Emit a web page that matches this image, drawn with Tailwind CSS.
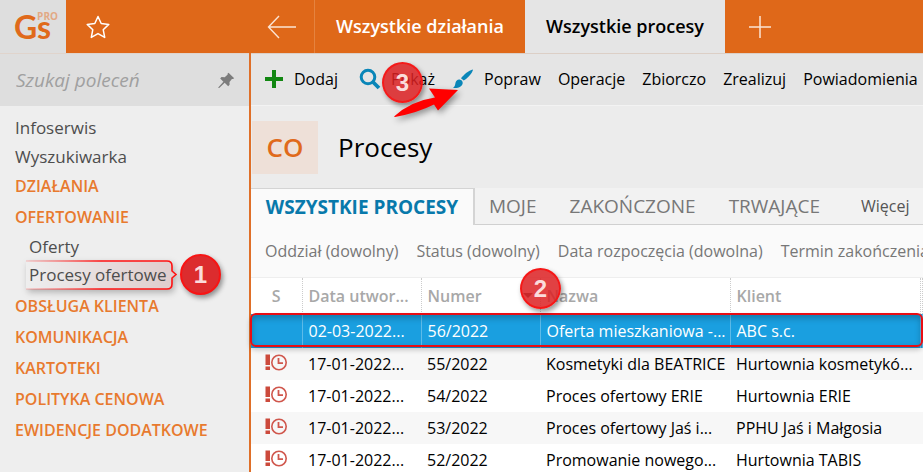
<!DOCTYPE html>
<html lang="pl">
<head>
  <meta charset="UTF-8" />
  <meta name="viewport" content="width=device-width, initial-scale=1.0" />
  <title>Wszystkie procesy</title>
  <script src="https://cdn.jsdelivr.net/npm/@tailwindcss/browser@4"></script>
</head>
<body class="min-h-screen h-screen overflow-hidden flex flex-col bg-[#ececec] font-['Open_Sans','Noto_Sans',sans-serif] text-[16px] text-black whitespace-nowrap">

  <header class="flex h-[53px] shrink-0 bg-[#df6819] text-white">
    <div class="flex w-[251px] shrink-0">
      <a href="#" class="flex w-[66px] items-center bg-[#dedede] pl-[14px] text-[#e06a1b]" aria-label="Gs PRO">
        <span class="font-['Lato',sans-serif] text-[32px] font-bold leading-none">Gs</span>
        <span class="-ml-[14px] mb-[21px] text-[10px] leading-none font-bold text-[#e2a985]">PRO</span>
      </a>
      <button class="ml-[19px]" aria-label="Ulubione">
        <svg width="26" height="26" viewBox="0 0 26 26" fill="none" stroke="#fff" stroke-width="1.5" stroke-linejoin="round"><path d="M13 2.5l3.2 7 7.6.9-5.6 5.3 1.5 7.7-6.7-3.8-6.7 3.8 1.5-7.7L2.2 10.4l7.6-.9z"/></svg>
      </button>
    </div>
    <button class="w-[63px] shrink-0 pl-4" aria-label="Wstecz">
      <svg width="30" height="24" viewBox="0 0 30 24" fill="none" stroke="#fbe3d3" stroke-width="1.4"><path d="M29 12H1.5M12 1L1.500 12 12 23"/></svg>
    </button>
    <nav class="flex text-[18px] font-semibold">
      <a href="#" class="flex w-[211px] items-center justify-center border-l border-[#e5833f]">Wszystkie działania</a>
      <a href="#" class="flex w-[200px] items-center justify-center bg-[#e5e5e5] text-black">Wszystkie procesy</a>
    </nav>
    <button class="ml-[23px]" aria-label="Nowa karta">
      <svg width="24" height="24" viewBox="0 0 24 24" stroke="#fbe3d3" stroke-width="1.5"><path d="M12 1v22M1 12h22"/></svg>
    </button>
  </header>

  <div class="flex min-h-0 grow">
    <aside class="w-[251px] shrink-0 border-r-2 border-[#df6f28] bg-[#eee]">
      <div class="flex h-[53px] items-center border-t border-[#e0d4cc] bg-[#dedede] pr-[14px] pl-4">
        <input type="text" aria-label="Szukaj poleceń" placeholder="Szukaj poleceń" class="min-w-0 grow text-[19px] italic outline-none placeholder:text-[#a0a0a0]" />
        <button aria-label="Przypnij">
          <svg width="17" height="17" viewBox="0 0 17 17" fill="#7c7c7c"><path d="M10.500.8l5.700 5.400-1.300.9-1-.2-2.400 3 .1 2.900-1.400 1.400-3.500-3.400L1.200 16H.4v-.8l5-5.500L2.200 6.500l1.300-1.400 3.200.1 3-2.600-.2-.8z"/></svg>
        </button>
      </div>
      <ul class="pt-[7px] pl-[15px] text-[#4d4d4d]">
        <li class="text-[17px] leading-[29px]"><a href="#">Infoserwis</a></li>
        <li class="text-[17px] leading-[29px]"><a href="#">Wyszukiwarka</a></li>
        <li class="leading-[31px] font-semibold text-[#e87a2e]"><a href="#">DZIAŁANIA</a></li>
        <li class="leading-[31px] font-semibold text-[#e87a2e]"><a href="#">OFERTOWANIE</a></li>
        <li class="pb-[2px] pl-[14px] text-[17px] leading-[28px]">
          <ul>
            <li><a href="#">Oferty</a></li>
            <li class="relative">
              <a href="#" class="relative z-10">Procesy ofertowe</a>
              <!-- callout 1 -->
              <svg class="absolute -top-[5px] -left-[4px] overflow-visible drop-shadow-[2px_3px_3px_rgba(0,0,0,0.25)]" width="156" height="36" viewBox="0 0 156 36" fill="none">
                <defs>
                  <linearGradient id="calloutLine" x1="0" x2="1"><stop stop-color="#f33" stop-opacity=".2"/><stop offset=".5" stop-color="#f11"/></linearGradient>
                  <linearGradient id="calloutFill" x1="0" x2="1"><stop stop-color="#eee"/><stop offset="1" stop-color="#dfcccc"/></linearGradient>
                </defs>
                <path d="M1 5H142Q147 5 147 10V15L151 18.500 147 22V28Q147 33 142 33H1z" fill="url(#calloutFill)"/>
                <path d="M1 5H142Q147 5 147 10V15L151 18.500 147 22V28Q147 33 142 33H1" stroke="url(#calloutLine)" stroke-width="1.6"/>
              </svg>
              <span class="absolute -top-[7px] left-[151px] flex size-[41px] items-center justify-center rounded-full border-2 border-[#f81414] bg-[#dc2c2e] font-['Liberation_Sans',sans-serif] text-[24px] font-bold text-[#fbdcdc] shadow-[2px_3px_5px_rgba(0,0,0,0.4)]">1</span>
            </li>
          </ul>
        </li>
        <li class="leading-[31px] font-semibold text-[#e87a2e]"><a href="#">OBSŁUGA KLIENTA</a></li>
        <li class="leading-[31px] font-semibold text-[#e87a2e]"><a href="#">KOMUNIKACJA</a></li>
        <li class="leading-[31px] font-semibold text-[#e87a2e]"><a href="#">KARTOTEKI</a></li>
        <li class="leading-[31px] font-semibold text-[#e87a2e]"><a href="#">POLITYKA CENOWA</a></li>
        <li class="leading-[31px] font-semibold text-[#e87a2e]"><a href="#">EWIDENCJE DODATKOWE</a></li>
      </ul>
    </aside>

    <main class="min-w-0 grow">
      <div class="relative flex h-[53px] items-center gap-[17px] border-t border-b border-t-[#dccfc6] border-b-[#f3f3f3] bg-[#e5e5e5] pb-px pl-[13px]">
        <button class="flex items-center gap-[10px]">
          <svg width="20" height="20" viewBox="0 0 20 20" fill="#128712"><path d="M8 1h4v7h7v4h-7v7H8v-7H1V8h7z"/></svg>
          Dodaj
        </button>
        <button class="flex items-center gap-[10px] pl-1">
          <svg width="22" height="22" viewBox="0 0 22 22" fill="none" stroke="#0a86b8" stroke-width="3"><circle cx="9" cy="9" r="6.8"/><path d="M14 14l6 6" stroke-width="3.8"/></svg>
          Pokaż
        </button>
        <button class="flex items-center gap-[10px]">
          <svg width="22" height="22" viewBox="0 0 22 22" fill="#0a86b8"><path d="M21 1.500c-.4 3.500-5 8.300-9.300 11.100L9 10.200C12 6.500 16.500 2.400 21 1.500z"/><path d="M7.600 11.500c1.800.3 3 1.600 3.100 3.200.2 3.400-4.200 6-9.700 5.300 2.200-1.500 2-3.200 2.500-5.200.5-2.100 2.100-3.600 4.100-3.300z"/></svg>
          Popraw
        </button>
        <button>Operacje</button>
        <button>Zbiorczo</button>
        <button>Zrealizuj</button>
        <button>Powiadomienia</button>
        <!-- callout 3 -->
        <span class="absolute top-[8px] left-[131px] flex size-[41px] items-center justify-center rounded-full border-2 border-[#f81414]/85 bg-[#dc2022]/85 font-['Liberation_Sans',sans-serif] text-[24px] font-bold text-[#fbdcdc] shadow-[2px_3px_5px_rgba(0,0,0,0.4)]">3</span>
        <svg class="absolute top-[33px] left-[142px] overflow-visible drop-shadow-[2px_3px_3px_rgba(0,0,0,0.4)]" width="66" height="32" viewBox="0 0 66 32" fill="#f00"><path d="M1 29.500Q18 14 42 10.500L36 1.500 65 3 45 23.500 41 17.500Q24 26 2 30z"/></svg>
      </div>

      <div class="flex h-[82px] items-center gap-5 pl-px text-[26px]">
        <div class="flex h-[53px] w-[66px] items-center justify-center bg-[#eee0d8] font-semibold text-[#e06a1b]">CO</div>
        <h1>Procesy</h1>
      </div>

      <nav class="flex h-[37px] text-[19px] text-[#777]">
        <a href="#" class="flex w-[224px] shrink-0 items-center justify-center border-t border-r-2 border-[#d4d4d4] bg-[#fafafa] font-bold text-[#0879ab]">WSZYSTKIE PROCESY</a>
        <div class="flex grow items-center gap-[33px] border-b border-[#d0d0d0] bg-[#f2f2f2] pl-[14px]">
          <a href="#">MOJE</a>
          <a href="#">ZAKOŃCZONE</a>
          <a href="#">TRWAJĄCE</a>
          <a href="#" class="pl-2 text-[16px] text-[#555]">Więcej</a>
        </div>
      </nav>

      <div class="flex h-[53px] items-center gap-[18px] overflow-hidden border-b border-[#eee] bg-[#fafafa] pl-[14px] text-[#777]">
        <button>Oddział (dowolny)</button>
        <button>Status (dowolny)</button>
        <button>Data rozpoczęcia (dowolna)</button>
        <button>Termin zakończenia</button>
      </div>

      <div class="relative bg-white">
        <table class="w-full table-fixed text-left">
          <colgroup>
            <col class="w-[51px]" /><col class="w-[119px]" /><col class="w-[119px]" /><col class="w-[190px]" /><col /><col class="w-[2px]" />
          </colgroup>
          <thead>
            <tr class="h-[36px] text-[#a8a8a8] *:border-r *:border-dotted *:border-[#ccc] *:px-[6px] *:py-0 *:font-semibold">
              <th class="text-center">S</th>
              <th>Data utwor...</th>
              <th>Numer</th>
              <th>Nazwa</th>
              <th>Klient</th>
              <td></td>
            </tr>
          </thead>
          <tbody id="rows"></tbody>
        </table>
        <svg class="absolute top-[15px] left-[272px]" width="10" height="5" viewBox="0 0 10 5" fill="#555"><path d="M0 0h10L5 5z"/></svg>
        <!-- callout 2 -->
        <div class="absolute inset-x-0 top-[35px] -ml-px h-[34px] rounded-[6px] border-2 border-[#e90d13] shadow-[inset_0_3px_6px_rgba(0,0,0,0.25),0_3px_5px_rgba(0,0,0,0.2)]"></div>
        <span class="absolute -top-[10px] left-[269px] flex size-[41px] items-center justify-center rounded-full border-2 border-[#f81414]/90 bg-[#dc2022]/85 font-['Liberation_Sans',sans-serif] text-[24px] font-bold text-[#fbdcdc] shadow-[2px_3px_5px_rgba(0,0,0,0.4)]">2</span>
      </div>
    </main>
  </div>

  <script>
    const rows = [
      ['02-03-2022...', '56/2022', 'Oferta mieszkaniowa -...', 'ABC s.c.'],
      ['17-01-2022...', '55/2022', 'Kosmetyki dla BEATRICE', 'Hurtownia kosmetykó...'],
      ['17-01-2022...', '54/2022', 'Proces ofertowy ERIE', 'Hurtownia ERIE'],
      ['17-01-2022...', '53/2022', 'Proces ofertowy Jaś i...', 'PPHU Jaś i Małgosia'],
      ['17-01-2022...', '52/2022', 'Promowanie nowego...', 'Hurtownia TABIS'],
    ];
    const overdue = `<svg class="ml-[14px] mb-1" width="23" height="17" viewBox="0 0 23 17" fill="none" stroke="#d0574d">
      <path d="M.5.5h4.500v10.500H.5zM.5 12.500h4.500v3.500H.5z" fill="#cc4a3c" stroke="none"/>
      <circle cx="14" cy="8.500" r="7.200" stroke-width="1.6"/><path d="M13.500 4v5.200h4.500" stroke-width="1.8"/></svg>`;

    document.getElementById('rows').innerHTML = rows.map((row, i) => {
      const selected = i === 0;
      const tr = selected
        ? 'h-[34px] bg-[#1a9fe0] text-white *:border-r *:border-[#5cbbe9]'
        : 'h-[32px] odd:bg-white even:bg-[#f7f7f7]';
      const cells = row.map(text => `<td class="overflow-hidden px-[6px] py-0">${text}</td>`).join('');
      return `<tr class="${tr}"><td class="p-0">${selected ? '' : overdue}</td>${cells}<td></td></tr>`;
    }).join('');
  </script>
</body>
</html>
